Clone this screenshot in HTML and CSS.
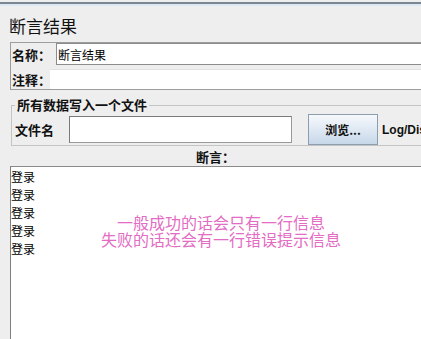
FILE: index.html
```html
<!DOCTYPE html>
<html lang="zh-CN">
<head>
  <meta charset="UTF-8" />
  <title>断言结果</title>
  <link rel="stylesheet" href="styles.css">
</head>
<body>
  <div class="window">
    <div class="topbar"></div>
    <h1 class="title">断言结果</h1>
    <div class="name-panel">
      <div class="row">
        <label class="label name-label" for="name">名称：</label>
        <input id="name" class="field name-field" type="text" value="断言结果">
      </div>
      <div class="row">
        <label class="label comment-label" for="comment">注释：</label>
        <input id="comment" class="field comment-field" type="text" value="">
      </div>
    </div>
    <fieldset class="file-group">
      <legend>所有数据写入一个文件</legend>
      <div class="file-row">
        <label class="label file-label" for="file">文件名</label>
        <input id="file" class="field file-field" type="text" value="">
        <button class="browse-btn">浏览...</button>
        <span class="log-label">Log/Dis</span>
      </div>
    </fieldset>
    <div class="section-label">断言：</div>
    <div class="results">
      <div class="result-line">登录</div>
      <div class="result-line">登录</div>
      <div class="result-line">登录</div>
      <div class="result-line">登录</div>
      <div class="result-line">登录</div>
      <div class="note">
        <p>一般成功的话会只有一行信息</p>
        <p>失败的话还会有一行错误提示信息</p>
      </div>
    </div>
  </div>
</body>
</html>
```

FILE: styles.css
```css
body {
  margin: 0;
  background: #eeeeee;
  font-family: "Noto Sans CJK SC", sans-serif;
  overflow: hidden;
}
.window {
  display: flex;
  flex-direction: column;
  height: 100vh;
}
.topbar {
  height: 2px;
  margin-top: 2px;
  border-bottom: 2px solid #dfe7f0;
  background: #7b8693;
  flex: none;
}
.title {
  margin: 10px 0 0 9px;
  font-size: 17px;
  line-height: 20px;
  font-weight: normal;
  color: #111;
  flex: none;
}
.name-panel {
  margin: 6px -30px 0 10px;
  border: 1px solid #9c9c9c;
  display: flex;
  flex-direction: column;
  gap: 4px;
  flex: none;
}
.row {
  display: flex;
  align-items: center;
}
.label {
  font-size: 13px;
  font-weight: bold;
  color: #111;
  padding-left: 1px;
  white-space: nowrap;
  flex: none;
}
.name-label {
  width: 44px;
}
.comment-label {
  width: 38px;
}
.field {
  font-family: "Noto Sans CJK SC", sans-serif;
  font-size: 12px;
  color: #000;
  background: #fff;
  margin: 0;
  outline: none;
  box-sizing: border-box;
  min-width: 0;
}
.name-field {
  flex: 1;
  height: 22px;
  padding: 0 1px;
  border: 1px solid #8c8c8c;
  border-right: none;
}
.comment-field {
  flex: 1;
  height: 20px;
  padding: 0 1px;
  border: none;
  border-top: 1px solid #e2e2e2;
}
.file-group {
  margin: 7px -30px 0 11px;
  padding: 1px 0 0 3px;
  border: 1px solid #c4c4c4;
  flex: none;
}
.file-group legend {
  font-size: 13px;
  font-weight: bold;
  line-height: 16px;
  padding: 0 2px;
  color: #111;
}
.file-row {
  display: flex;
  align-items: center;
  height: 31px;
  white-space: nowrap;
}
.file-label {
  width: 54px;
  padding-left: 0;
}
.file-field {
  width: 223px;
  height: 27px;
  padding: 0 2px;
  border: 1px solid #999;
  border-top-color: #7a7a7a;
  border-left-color: #7a7a7a;
}
.browse-btn {
  margin-left: 16px;
  width: 70px;
  height: 31px;
  border: 1px solid #8d9dad;
  background: linear-gradient(#f6f9fc, #dde7f2 55%, #c6d7e9);
  font-family: "Noto Sans CJK SC", sans-serif;
  font-size: 12px;
  font-weight: bold;
  color: #111;
  padding: 0;
}
.log-label {
  margin-left: 4px;
  font-family: "Liberation Sans", Arial, sans-serif;
  font-size: 12px;
  font-weight: bold;
  color: #111;
}
.section-label {
  margin: 2px -10px 0 0;
  height: 18px;
  line-height: 18px;
  text-align: center;
  font-size: 13px;
  font-weight: bold;
  color: #111;
  flex: none;
}
.results {
  position: relative;
  flex: 1;
  margin: 0 -30px 0 10px;
  padding-top: 1px;
  background: #fff;
  border-top: 1px solid #8a8a8a;
  border-left: 1px solid #7f7f7f;
}
.result-line {
  font-size: 12px;
  line-height: 18px;
  color: #000;
}
.note {
  position: absolute;
  top: 47px;
  left: 90px;
  width: 240px;
  text-align: center;
  color: #e36cc4;
  font-size: 16px;
  line-height: 17px;
}
.note p {
  margin: 0;
  white-space: nowrap;
}
```
